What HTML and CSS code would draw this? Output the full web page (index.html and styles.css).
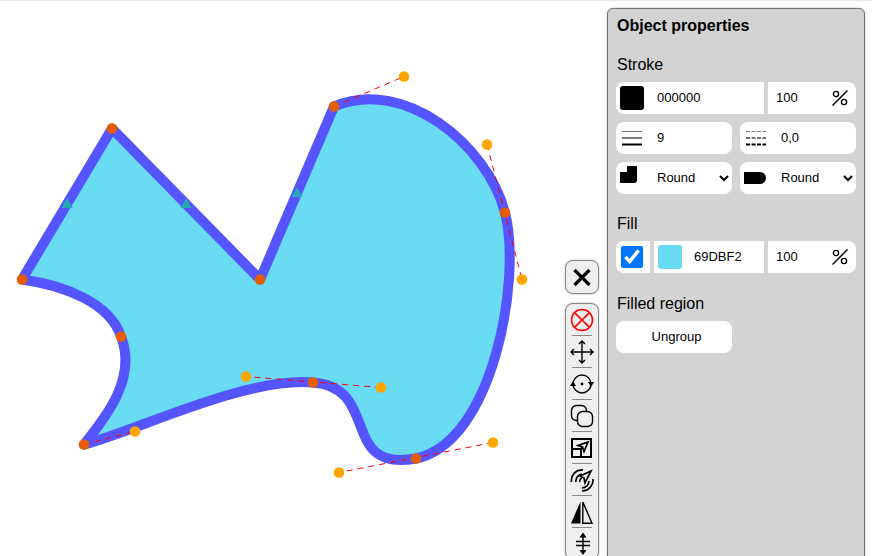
FILE: index.html
```html
<!DOCTYPE html>
<html lang="en">
<head>
  <meta charset="UTF-8">
  <title>Path editor</title>
  <link rel="stylesheet" href="styles.css">
</head>
<body>
  <svg class="canvas" width="565" height="555" viewBox="0 0.5 565 555">
    <path class="shape" d="M22 279 L112 128 L260 279 L334 106 C404 76 487 144 505 212 C522 279 493 442 416 458 C339 472 381 387 313 382 C246 376 135 431 84 444 C102 421 138 380 121 336 C110 303 66 285 22 279 Z"/>
    <path class="guide" d="M334 106 L404 76 M487 144 L522 279 M493 442 L339 472 M381 387 L246 376 M84 444 L135 431"/>
    <polygon class="mid" points="67,197.5 72.5,207.5 61.5,207.5"/>
    <polygon class="mid" points="186,197.5 191.5,207.5 180.5,207.5"/>
    <polygon class="mid" points="297,186.5 302.5,196.5 291.5,196.5"/>
    <g class="handle">
      <circle cx="404" cy="76" r="5.3"/>
      <circle cx="487" cy="144" r="5.3"/>
      <circle cx="522" cy="279" r="5.3"/>
      <circle cx="493" cy="442" r="5.3"/>
      <circle cx="339" cy="472" r="5.3"/>
      <circle cx="381" cy="387" r="5.3"/>
      <circle cx="246" cy="376" r="5.3"/>
      <circle cx="135" cy="431" r="5.3"/>
    </g>
    <g class="anchor">
      <circle cx="22" cy="279" r="5.3"/>
      <circle cx="112" cy="128" r="5.3"/>
      <circle cx="260" cy="279" r="5.3"/>
      <circle cx="334" cy="106" r="5.3"/>
      <circle cx="505" cy="212" r="5.3"/>
      <circle cx="416" cy="458" r="5.3"/>
      <circle cx="313" cy="382" r="5.3"/>
      <circle cx="84" cy="444" r="5.3"/>
      <circle cx="121" cy="336" r="5.3"/>
    </g>
  </svg>

  <div class="toolbar">
    <button class="close-btn" type="button" title="Close">
      <svg width="20" height="20" viewBox="0 0 20 20"><path class="thick" d="M2.5 3 L17.5 18 M17.5 3 L2.5 18"/></svg>
    </button>
    <div class="tools">
      <div class="tool">
        <svg width="24" height="24" viewBox="0 0 24 24"><g class="red"><circle cx="12" cy="12" r="10.5"/><path d="M4.6 4.6 L19.4 19.4 M19.4 4.6 L4.6 19.4"/></g></svg>
      </div>
      <hr class="sep">
      <div class="tool">
        <svg width="24" height="24" viewBox="0 0 24 24"><path class="line" d="M12 1 V23 M1 12 H23 M9 4 L12 1 L15 4 M9 20 L12 23 L15 20 M4 9 L1 12 L4 15 M20 9 L23 12 L20 15"/></svg>
      </div>
      <hr class="sep">
      <div class="tool">
        <svg width="24" height="24" viewBox="0 0 24 24">
          <circle class="line" cx="12" cy="12" r="9"/>
          <circle cx="12" cy="12" r="1.4"/>
          <polygon points="0,14 6,14 3,9"/>
          <polygon points="18,10 24,10 21,15"/>
        </svg>
      </div>
      <hr class="sep">
      <div class="tool">
        <svg width="24" height="24" viewBox="0 0 24 24">
          <rect class="line" x="1.5" y="1.5" width="15" height="15" rx="5"/>
          <rect class="line solid" x="7.5" y="7.5" width="15" height="15" rx="5"/>
        </svg>
      </div>
      <hr class="sep">
      <div class="tool">
        <svg width="24" height="24" viewBox="0 0 24 24">
          <rect class="frame" x="2" y="3" width="19" height="18"/>
          <path class="frame" d="M2 13 H11 V21"/>
          <path class="line bold" d="M18 6 L8 9.5 L12.5 11 L14 15.5 Z M12.5 11 L11 13"/>
        </svg>
      </div>
      <hr class="sep">
      <div class="tool">
        <svg width="24" height="24" viewBox="0 0 24 24">
          <path class="line bold" d="M1.5 14 A10.5 10.5 0 0 1 13 2 M23 11 A11 11 0 0 1 12 23 M6 14 A7 7 0 0 1 12 6 M19 13 A7 7 0 0 1 12 20 M10 14 A3 3 0 0 1 12 10"/>
          <path class="line bold solid" d="M21 3 L10 8 L14 10 L15 15 Z"/>
        </svg>
      </div>
      <hr class="sep">
      <div class="tool">
        <svg width="24" height="24" viewBox="0 0 24 24">
          <polygon points="1,23.5 10.5,1.5 10.5,23.5"/>
          <path class="line" d="M12.8 2 L22 23.2 H12.8 Z"/>
        </svg>
      </div>
      <hr class="sep">
      <div class="tool">
        <svg width="24" height="24" viewBox="0 0 24 24">
          <path class="line" d="M13 3 V21 M6 9.5 H20 M6 13.5 H20"/>
          <polygon points="13,0.5 9.5,5.5 16.5,5.5"/>
          <polygon points="13,23 9.5,18 16.5,18"/>
        </svg>
      </div>
    </div>
  </div>

  <div class="panel">
    <h2 class="title">Object properties</h2>

    <div class="section">
      <div class="label">Stroke</div>
      <div class="rows">
        <div class="row">
          <div class="box wide left">
            <span class="swatch black"></span>
            <input class="val val-hex" type="text" value="000000">
          </div>
          <div class="box pct right">
            <input class="val val-pct" type="text" value="100">
            <svg class="pct-icon" width="16" height="16" viewBox="0 0 16 16"><path class="line" d="M0.5 15.5 L15.5 0.5"/><circle class="line" cx="4" cy="4" r="2.6"/><circle class="line" cx="12" cy="12" r="2.6"/></svg>
          </div>
        </div>
        <div class="row spaced">
          <div class="box half">
            <svg class="row-icon" width="20" height="16" viewBox="0 0 20 16"><path class="w1" d="M0 1.5 H20"/><path class="w2" d="M0 8 H20"/><path class="w3" d="M0 14.5 H20"/></svg>
            <input class="val val-num" type="text" value="9">
          </div>
          <div class="box half">
            <svg class="row-icon" width="20" height="16" viewBox="0 0 20 16"><path class="w1 d1" d="M0 1.5 H20"/><path class="w2 d2" d="M0 8 H20"/><path class="w3 d3" d="M0 14.5 H20"/></svg>
            <input class="val val-num" type="text" value="0,0">
          </div>
        </div>
        <div class="row spaced">
          <div class="box half pick">
            <select><option>Round</option><option>Miter</option><option>Bevel</option></select>
            <svg class="pick-icon join" width="17" height="17" viewBox="0 0 17 17"><path d="M0 6 H7 V0 H17 V14 A3 3 0 0 1 14 17 H0 Z"/></svg>
          </div>
          <div class="box half pick">
            <select><option>Round</option><option>Butt</option><option>Square</option></select>
            <svg class="pick-icon cap" width="22" height="12" viewBox="0 0 22 12"><path d="M0 0 H16 A6 6 0 0 1 16 12 H0 Z"/></svg>
          </div>
        </div>
      </div>
    </div>

    <div class="section">
      <div class="label">Fill</div>
      <div class="rows">
        <div class="row">
          <div class="box check left"><input type="checkbox" checked></div>
          <div class="box mid-box">
            <span class="swatch cyan"></span>
            <input class="val val-fill" type="text" value="69DBF2">
          </div>
          <div class="box pct right">
            <input class="val val-pct" type="text" value="100">
            <svg class="pct-icon" width="16" height="16" viewBox="0 0 16 16"><path class="line" d="M0.5 15.5 L15.5 0.5"/><circle class="line" cx="4" cy="4" r="2.6"/><circle class="line" cx="12" cy="12" r="2.6"/></svg>
          </div>
        </div>
      </div>
    </div>

    <div class="section last">
      <div class="label">Filled region</div>
      <div class="rows">
        <button class="action" type="button">Ungroup</button>
      </div>
    </div>
  </div>
</body>
</html>
```

FILE: styles.css
```css
html, body {
  margin: 0;
  height: 100%;
  overflow: hidden;
  background: #fff;
}
body {
  display: flex;
  align-items: flex-start;
  border-top: 1px solid #e9e9e9;
  box-sizing: border-box;
  font-family: "Liberation Sans", Arial, sans-serif;
  color: #000;
}

/* drawing */
.canvas {
  flex: none;
  display: block;
}
.shape {
  fill: #69DBF2;
  stroke: #5555ff;
  stroke-width: 10;
  stroke-linejoin: round;
}
.guide {
  fill: none;
  stroke: #ff0000;
  stroke-width: 1;
  stroke-dasharray: 6 5;
}
.mid { fill: #26a9b5; }
.handle { fill: #ffa500; }
.anchor { fill: #e65c00; }

/* toolbar */
.toolbar {
  flex: none;
  width: 34px;
  padding-top: 259px;
}
.close-btn {
  display: flex;
  align-items: center;
  justify-content: center;
  box-sizing: border-box;
  width: 34px;
  height: 34px;
  padding: 0;
  background: #efefef;
  border: 1px solid #888;
  border-radius: 8px;
  box-shadow: 0 0 2px rgba(0, 0, 0, .35);
}
.tools {
  box-sizing: border-box;
  width: 34px;
  margin-top: 9px;
  background: #efefef;
  border: 1px solid #888;
  border-radius: 8px;
  box-shadow: 0 0 2px rgba(0, 0, 0, .35);
}
.tool {
  display: flex;
  align-items: center;
  justify-content: center;
  height: 31px;
}
.tool svg { display: block; }
.sep {
  width: 20px;
  height: 1px;
  margin: 0 auto;
  border: 0;
  background: #888;
}
.thick {
  fill: none;
  stroke: #000;
  stroke-width: 3.2;
}
.line {
  fill: none;
  stroke: #000;
  stroke-width: 1.4;
}
.line.bold { stroke-width: 1.7; }
.line.solid { fill: #efefef; }
.frame {
  fill: none;
  stroke: #000;
  stroke-width: 2;
}
.red {
  fill: none;
  stroke: #ff0000;
  stroke-width: 1.5;
}

/* properties panel */
.panel {
  flex: none;
  box-sizing: border-box;
  width: 258px;
  height: 620px;
  margin: 7px 0 0 8px;
  padding: 8px 8px 0;
  background: #d3d3d3;
  border: 1px solid #777;
  border-radius: 6px;
  box-shadow: 0 0 2px rgba(0, 0, 0, .35);
}
.title {
  margin: 0;
  padding-left: 1px;
  font-size: 16px;
  line-height: 18px;
  font-weight: bold;
}
.section { margin-top: 21px; }
.section.last { margin-top: 22px; }
.label {
  padding-left: 1px;
  font-size: 16px;
  line-height: 18px;
  margin-bottom: 8px;
}
.rows {
  display: flex;
  flex-direction: column;
  gap: 8px;
}
.row {
  display: flex;
  gap: 4px;
}
.row.spaced { gap: 8px; }
.box {
  display: flex;
  align-items: center;
  box-sizing: border-box;
  height: 32px;
  background: #fff;
  border-radius: 8px;
}
.box.left { border-radius: 8px 0 0 8px; }
.box.right { border-radius: 0 8px 8px 0; }
.wide { width: 148px; }
.half { width: 116px; }
.pct { width: 88px; padding-left: 8px; }
.check { width: 34px; padding-left: 5px; }
.check input {
  width: 22px;
  height: 22px;
  margin: 0;
}
.mid-box { width: 110px; border-radius: 0; }
.swatch {
  flex: none;
  width: 24px;
  height: 24px;
  margin-left: 4px;
  border-radius: 3px;
}
.black { background: #000; }
.cyan { background: #69DBF2; }
.val {
  min-width: 0;
  padding: 0 0 2px;
  border: 0;
  outline: 0;
  background: transparent;
  font: 13px "Liberation Sans", Arial, sans-serif;
  color: #000;
}
.val-hex { width: 90px; margin-left: 13px; }
.val-fill { width: 70px; margin-left: 12px; }
.val-pct { width: 50px; }
.val-num { width: 70px; margin-left: 15px; }
.pct-icon {
  margin-left: auto;
  margin-right: 8px;
}
.row-icon {
  flex: none;
  margin-left: 6px;
}
.w1 { stroke: #777; stroke-width: 1; }
.w2 { stroke: #444; stroke-width: 1.4; }
.w3 { stroke: #000; stroke-width: 2; }
.d1 { stroke-dasharray: 4 1.5; }
.d2 { stroke-dasharray: 4 1.5; }
.d3 { stroke-dasharray: 4 1.5; }
.pick { position: relative; }
.pick select {
  width: 100%;
  height: 32px;
  padding: 0 0 2px 37px;
  border: 0;
  outline: 0;
  background: transparent;
  font: 13px "Liberation Sans", Arial, sans-serif;
  color: #000;
}
.pick-icon { position: absolute; }
.join { left: 4px; top: 4px; }
.cap { left: 4px; top: 10px; }
.action {
  width: 116px;
  height: 32px;
  padding: 0 0 2px 5px;
  border: 0;
  background: #fff;
  border-radius: 8px;
  font: 13px "Liberation Sans", Arial, sans-serif;
  color: #000;
}
```
